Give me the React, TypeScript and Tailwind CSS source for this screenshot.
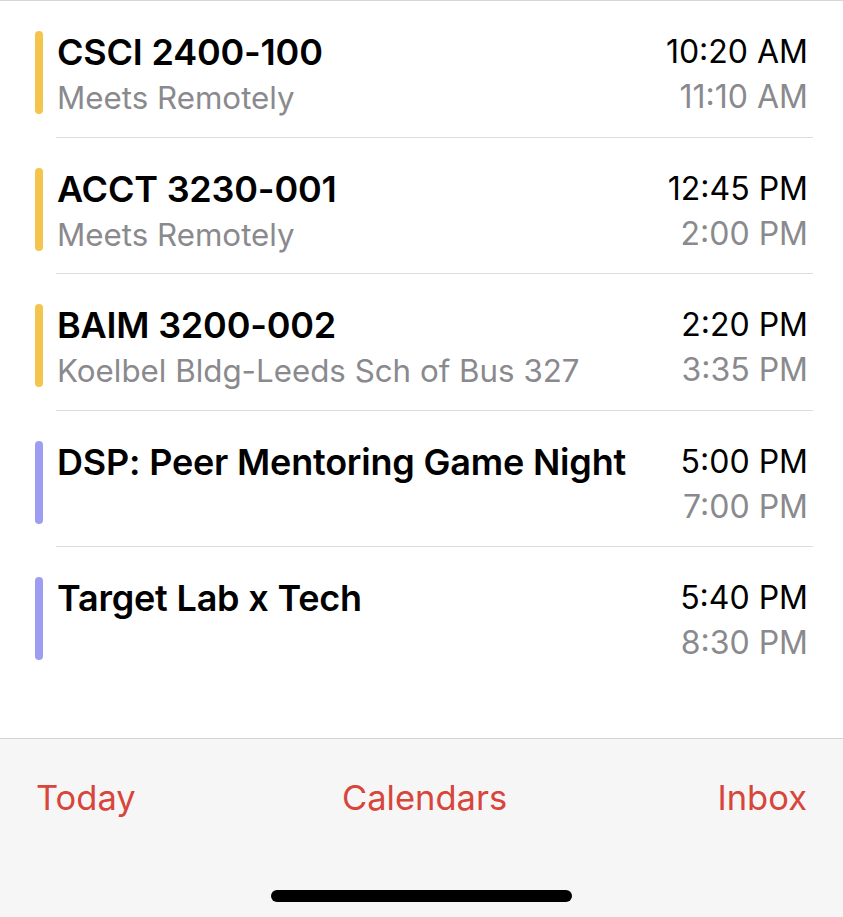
const events = [
  { title: "CSCI 2400-100", sub: "Meets Remotely", start: "10:20 AM", end: "11:10 AM", color: "bg-[#f4c54c]" },
  { title: "ACCT 3230-001", sub: "Meets Remotely", start: "12:45 PM", end: "2:00 PM", color: "bg-[#f4c54c]" },
  { title: "BAIM 3200-002", sub: "Koelbel Bldg-Leeds Sch of Bus 327", start: "2:20 PM", end: "3:35 PM", color: "bg-[#f4c54c]" },
  { title: "DSP: Peer Mentoring Game Night", sub: "", start: "5:00 PM", end: "7:00 PM", color: "bg-[#9d9df2]" },
  { title: "Target Lab x Tech", sub: "", start: "5:40 PM", end: "8:30 PM", color: "bg-[#9d9df2]" },
]

function EventRow({ ev, last }: { ev: (typeof events)[number]; last: boolean }) {
  return (
    <div className="flex h-[136.5px] pl-[35px]">
      <div className={`mt-[30px] h-[83px] w-[8px] shrink-0 rounded-full ${ev.color}`} />
      <div
        className={`ml-[13px] mr-[30px] flex flex-1 justify-between pr-[5px] pt-[29px] ${
          last ? "" : "border-b border-[#dcdcde]"
        }`}
      >
        <div className="pl-[1px]">
          <div className="text-[36px] font-semibold leading-[44px] tracking-[-0.2px] text-black">{ev.title}</div>
          <div className="mt-[4px] text-[31.3px] leading-[40px] text-[#8a8a8e]">{ev.sub}</div>
        </div>
        <div className="text-right">
          <div className="text-[32px] leading-[44px] text-black">{ev.start}</div>
          <div className="mt-[2px] text-[32px] leading-[42px] text-[#8a8a8e]">{ev.end}</div>
        </div>
      </div>
    </div>
  )
}

export default function App() {
  return (
    <div className="flex h-[917px] w-[843px] flex-col bg-white font-['Inter',sans-serif]">
      <div className="flex-1 border-t border-[#d6d6d8]">
        {events.map((ev, i) => (
          <EventRow key={ev.title} ev={ev} last={i === events.length - 1} />
        ))}
      </div>
      <div className="flex h-[179px] flex-col border-t border-[#d4d4d6] bg-[#f6f6f6]">
        <div className="flex justify-between px-[36px] pt-[37px] text-[34.5px] leading-[44px] text-[#d8453b]">
          <span>Today</span>
          <span className="-ml-[4px]">Calendars</span>
          <span>Inbox</span>
        </div>
        <div className="mt-auto mb-[15px] flex justify-center">
          <div className="h-[12px] w-[301px] rounded-full bg-black" />
        </div>
      </div>
    </div>
  )
}
